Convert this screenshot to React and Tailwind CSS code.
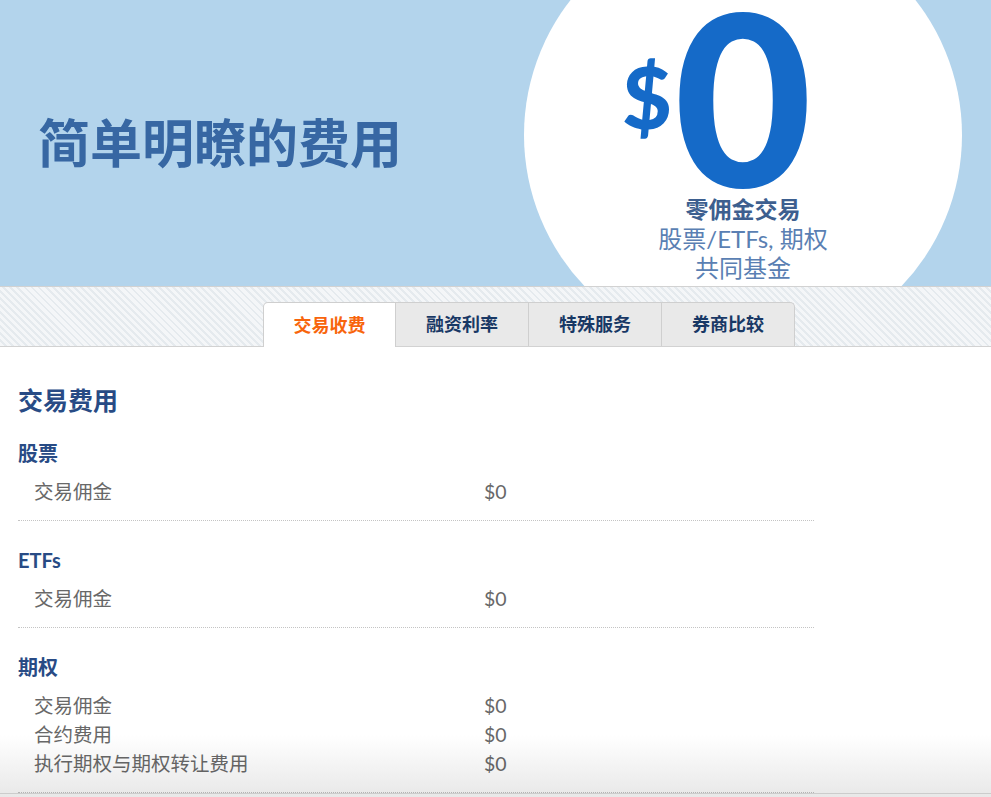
import React from "react";

const sans = "font-['Lato','Noto_Sans_CJK_SC',sans-serif]";

const sections = [
  { title: "股票", rows: [["交易佣金", "$0"]] },
  { title: "ETFs", rows: [["交易佣金", "$0"]] },
  {
    title: "期权",
    rows: [
      ["交易佣金", "$0"],
      ["合约费用", "$0"],
      ["执行期权与期权转让费用", "$0"],
    ],
  },
];

const tabs = ["交易收费", "融资利率", "特殊服务", "券商比较"];

export default function App() {
  return (
    <div className={`${sans} min-h-screen bg-white`}>
      {/* Hero banner */}
      <header className="flex h-[286px] items-center overflow-hidden bg-[#b3d4ec]">
        <h1 className="pl-[38px] text-[52px] font-bold leading-none text-[#3767a3]">
          简单明瞭的费用
        </h1>
        <div className="ml-auto mr-[29px] mt-[-84px] flex h-[438px] w-[438px] shrink-0 flex-col items-center self-start rounded-full bg-white pt-[82px]">
          <div className="flex items-center text-[#156ac8]">
            <span className="w-[52px] text-left text-[86px] font-black leading-none">$</span>
            <span className="text-[238px] font-black leading-[0.82]">0</span>
            <span className="w-[52px]" />
          </div>
          <div className="mt-[2px] flex flex-col items-center leading-[29px]">
            <span className="text-[23px] font-bold text-[#3d5f8f]">零佣金交易</span>
            <span className="text-[24px] text-[#5a7fb3]">股票/ETFs, 期权</span>
            <span className="text-[24px] text-[#5a7fb3]">共同基金</span>
          </div>
        </div>
      </header>

      {/* Tab strip */}
      <nav className="flex h-[61px] items-end border-y border-[#d2d2d2] bg-[repeating-linear-gradient(45deg,#f4f6f8_0px,#f4f6f8_3px,#e5eaee_3px,#e5eaee_5px)] pl-[263px]">
        {tabs.map((t, i) => (
          <div
            key={t}
            className={
              i === 0
                ? "mb-[-1px] flex h-[45px] w-[133px] items-center justify-center rounded-tl-[5px] border border-b-0 border-[#cfcfcf] bg-white text-[18px] font-bold text-[#f8650c]"
                : i === tabs.length - 1
                ? "flex h-[44px] w-[133px] items-center justify-center rounded-tr-[5px] border border-b-0 border-l-0 border-[#cfcfcf] bg-[#e9e9e9] text-[18px] font-bold text-[#183865]"
                : "flex h-[44px] w-[133px] items-center justify-center border border-b-0 border-l-0 border-[#cfcfcf] bg-[#e9e9e9] text-[18px] font-bold text-[#183865]"
            }
          >
            {t}
          </div>
        ))}
      </nav>

      {/* Fee tables */}
      <main className="px-[18px] pt-[36px]">
        <h2 className="text-[25px] font-bold leading-[34px] text-[#284b85]">交易费用</h2>
        {sections.map((s, i) => (
          <section
            key={s.title}
            className={`${i === 0 ? "mt-[22px]" : "mt-[25px]"} w-[796px] border-b border-dotted border-[#c4c4c4] pb-[14px]`}
          >
            <h3 className="text-[20px] font-bold leading-[28px] text-[#284b85]">{s.title}</h3>
            <div className="mt-[10px]">
              {s.rows.map(([label, value]) => (
                <div key={label} className="flex pl-[16px] text-[19.5px] leading-[29px] text-[#686868]">
                  <span className="w-[450px]">{label}</span>
                  <span>{value}</span>
                </div>
              ))}
            </div>
          </section>
        ))}
      </main>

      {/* Bottom fade over the page */}
      <div className="pointer-events-none fixed inset-x-0 bottom-0 flex h-[62px] flex-col justify-end bg-gradient-to-b from-white to-[#e8e8e8] pb-[3px] mix-blend-multiply">
        <div className="h-px bg-[#cccccc]" />
      </div>
    </div>
  );
}
